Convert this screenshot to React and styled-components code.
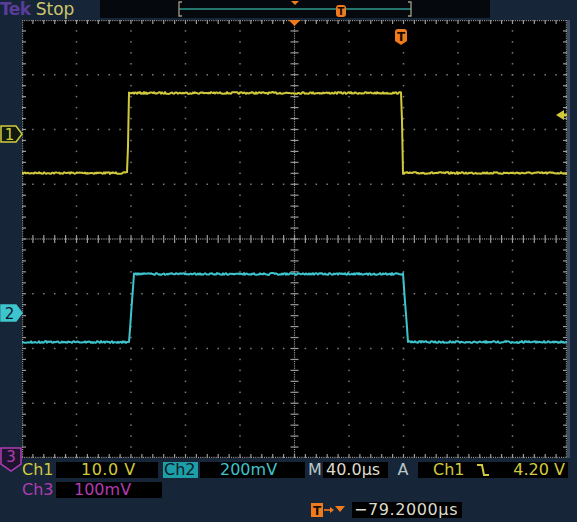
import React from "react";
import styled, { createGlobalStyle } from "styled-components";

const Global = createGlobalStyle`
  html, body { margin: 0; padding: 0; background: #172538; }
  #root { width: 577px; height: 522px; }
`;

const C = {
  bg: "#172538",
  y: "#d2ca3c",
  cy: "#3ec4cc",
  pu: "#b23cb4",
  or: "#f07a1e",
  txt: "#dcdccc",
  m: "#b9c6c6",
};

const Screen = styled.div`
  width: 577px;
  height: 522px;
  background: ${C.bg};
  overflow: hidden;
  font-family: "DejaVu Sans", Verdana, sans-serif;
  position: relative;
`;

const TopBar = styled.div`
  display: flex;
  height: 20px;
`;

const Brand = styled.div`
  width: 100px;
  display: flex;
  align-items: center;
  gap: 5px;
  font-size: 17px;
  line-height: 18px;
  height: 18px;
`;

const Tek = styled.span`
  color: #5a3c9a;
  font-weight: bold;
  letter-spacing: -0.5px;
`;

const Status = styled.span`
  color: #cdc56a;
`;

const RecordStrip = styled.div`
  width: 390px;
  height: 18px;
  background: #05080c;
`;

const Display = styled.div`
  display: flex;
  height: 438px;
`;

const Gutter = styled.div`
  width: 22px;
  position: relative;
`;

const Graticule = styled.div`
  width: 545px;
  height: 438px;
  background: #000;
`;

const RightEdge = styled.div`
  width: 3px;
  background: #3e4d66;
`;

const Marker = styled.div`
  position: absolute;
  left: 0;
  top: ${(p) => p.$top}px;
  width: 23px;
  height: ${(p) => p.$h || 18}px;
`;

const Readouts = styled.div`
  display: flex;
  flex-direction: column;
  padding-top: 4px;
  gap: 4px;
`;

const Row = styled.div`
  display: flex;
  align-items: center;
  height: 16px;
  padding-left: ${(p) => p.$pl || 22}px;
  font-size: 16px;
  line-height: 16px;
  margin-top: ${(p) => p.$mt || 0}px;
`;

const Label = styled.span`
  width: ${(p) => p.$w}px;
  margin-left: ${(p) => p.$ml || 0}px;
  color: ${(p) => p.$c};
  text-align: ${(p) => p.$align || "left"};
  white-space: nowrap;
`;

const Tag = styled.span`
  width: ${(p) => p.$w}px;
  margin-left: ${(p) => p.$ml || 0}px;
  background: #1e9ea6;
  color: #0b1b2a;
  height: 16px;
  display: flex;
  align-items: center;
  padding-left: 1px;
  box-sizing: border-box;
`;

const Box = styled.span`
  width: ${(p) => p.$w}px;
  margin-left: ${(p) => p.$ml || 0}px;
  height: 16px;
  background: #000;
  color: ${(p) => p.$c};
  padding-left: ${(p) => p.$pl || 0}px;
  box-sizing: border-box;
  display: flex;
  align-items: center;
  white-space: nowrap;
  letter-spacing: ${(p) => p.$ls || 0}px;
`;

const Spacer = styled.span`
  flex: ${(p) => (p.$grow ? 1 : "none")};
  width: ${(p) => p.$w || 0}px;
`;

const W = 545;
const H = 438;
const DX = W / 10;
const DY = H / 8;

function rng(seed) {
  let s = seed;
  return () => {
    s = (s * 16807) % 2147483647;
    return s / 2147483647;
  };
}

function wave(lo, hi, r0, r1, f0, f1, seed) {
  const r = rng(seed);
  const pts = [];
  for (let x = 0; x <= W; x += 1) {
    let y;
    if (x < r0) y = lo;
    else if (x < r1) y = lo + ((hi - lo) * (x - r0)) / (r1 - r0);
    else if (x < f0) y = hi;
    else if (x < f1) y = hi + ((lo - hi) * (x - f0)) / (f1 - f0);
    else y = lo;
    const n = (r() - 0.5) * 1.8;
    pts.push(`${x},${(y + n).toFixed(2)}`);
  }
  return pts.join(" ");
}

const yellowPts = wave(153, 73, 105.5, 107, 379.5, 381, 7);
const cyanPts = wave(322, 254, 107, 112, 381, 386, 13);

function GridDrawing() {
  const dots = [];
  const gc = "#7c7c7c";
  for (let i = 1; i < 10; i++) {
    if (i === 5) continue;
    for (let k = 1; k < 40; k++) {
      dots.push(<rect key={`v${i}-${k}`} x={i * DX - 0.75} y={(k * DY) / 5 - 0.75} width="1.5" height="1.5" fill={gc} />);
    }
  }
  for (let j = 1; j < 8; j++) {
    if (j === 4) continue;
    for (let k = 1; k < 50; k++) {
      dots.push(<rect key={`h${j}-${k}`} x={(k * DX) / 5 - 0.75} y={j * DY - 0.75} width="1.5" height="1.5" fill={gc} />);
    }
  }
  const cc = "#9a9a9a";
  const cx = 5 * DX;
  const cyy = 4 * DY;
  const center = [];
  for (let y = 0; y < H; y += 2.2) {
    center.push(<rect key={`cv${y}`} x={cx - 0.6} y={y} width="1.2" height="1.1" fill={cc} />);
  }
  for (let x = 0; x < W; x += 2.2) {
    center.push(<rect key={`ch${x}`} x={x} y={cyy - 0.6} width="1.1" height="1.2" fill={cc} />);
  }
  for (let k = 1; k < 40; k++) {
    center.push(<rect key={`tv${k}`} x={cx - 4} y={(k * DY) / 5 - 0.6} width="8" height="1.2" fill={cc} />);
  }
  for (let k = 1; k < 50; k++) {
    center.push(<rect key={`th${k}`} x={(k * DX) / 5 - 0.6} y={cyy - 4} width="1.2" height="8" fill={cc} />);
  }
  const edges = [];
  for (let x = 0; x < W; x += 2.2) {
    edges.push(<rect key={`et${x}`} x={x} y={0} width="1.1" height="1.2" fill={cc} />);
    edges.push(<rect key={`eb${x}`} x={x} y={H - 1.2} width="1.1" height="1.2" fill={cc} />);
  }
  for (let y = 0; y < H; y += 2.2) {
    edges.push(<rect key={`el${y}`} x={0} y={y} width="1.2" height="1.1" fill={cc} />);
    edges.push(<rect key={`er${y}`} x={W - 1.2} y={y} width="1.2" height="1.1" fill={cc} />);
  }
  for (let k = 1; k < 50; k++) {
    edges.push(<rect key={`tt${k}`} x={(k * DX) / 5 - 0.6} y={0} width="1.2" height="4" fill={cc} />);
    edges.push(<rect key={`tb${k}`} x={(k * DX) / 5 - 0.6} y={H - 4} width="1.2" height="4" fill={cc} />);
  }
  for (let k = 1; k < 40; k++) {
    edges.push(<rect key={`tl${k}`} x={0} y={(k * DY) / 5 - 0.6} width="4" height="1.2" fill={cc} />);
    edges.push(<rect key={`tr${k}`} x={W - 4} y={(k * DY) / 5 - 0.6} width="4" height="1.2" fill={cc} />);
  }
  return (
    <svg width={W} height={H} viewBox={`0 0 ${W} ${H}`} style={{ display: "block" }}>
      {dots}
      {center}
      {edges}
      <polyline points={cyanPts} fill="none" stroke={C.cy} strokeWidth="2" strokeLinejoin="round" />
      <polyline points={yellowPts} fill="none" stroke={C.y} strokeWidth="2" strokeLinejoin="round" />
      <polygon points={`${cx - 6},0 ${cx + 6},0 ${cx},6`} fill={C.or} />
      <g transform="translate(373,9)">
        <path d="M0,3 Q0,0 3,0 H9 Q12,0 12,3 V12 L6,16 L0,12 Z" fill={C.or} />
        <text x="6" y="12" textAnchor="middle" fontSize="12" fontWeight="bold" fontFamily="DejaVu Sans, sans-serif" fill="#1a0c00">T</text>
      </g>
      <path d="M534,95 L542,90 V93.5 H545 V96.5 H542 V100 Z" fill={C.y} />
    </svg>
  );
}

function RecordDrawing() {
  return (
    <svg width="390" height="18" viewBox="0 0 390 18" style={{ display: "block" }}>
      <rect x="79" y="8.2" width="232" height="1.6" fill="#2b8f86" />
      <path d="M82,2 H79 V16 H82" fill="none" stroke="#a39d82" strokeWidth="1.3" />
      <path d="M308,2 H311 V16 H308" fill="none" stroke="#a39d82" strokeWidth="1.3" />
      <polygon points="191,1 199,1 195,5" fill={C.or} />
      <rect x="236" y="5" width="10" height="12" rx="3" fill={C.or} />
      <text x="241" y="15" textAnchor="middle" fontSize="10" fontWeight="bold" fontFamily="DejaVu Sans, sans-serif" fill="#1a0c00">T</text>
    </svg>
  );
}

function ChannelMarker({ n, color, filled }) {
  return (
    <svg width="23" height="18" viewBox="0 0 23 18" style={{ display: "block" }}>
      <path
        d="M1,1 H16 L22,9 L16,17 H1 Z"
        fill={filled ? color : "#101a10"}
        stroke={color}
        strokeWidth="1.5"
      />
      <text
        x="9.5"
        y="14.5"
        textAnchor="middle"
        fontSize="15"
        fontFamily="DejaVu Sans, sans-serif"
        fill={filled ? "#0b1b2a" : color}
      >
        {n}
      </text>
    </svg>
  );
}

function DownMarker({ n, color }) {
  return (
    <svg width="23" height="25" viewBox="0 0 23 25" style={{ display: "block" }}>
      <path d="M1,1 H21 V17 L11,24 L1,17 Z" fill="#1e1430" stroke={color} strokeWidth="1.5" />
      <text x="11" y="15" textAnchor="middle" fontSize="15" fontFamily="DejaVu Sans, sans-serif" fill={color}>
        {n}
      </text>
    </svg>
  );
}

function FallEdge() {
  return (
    <svg width="12" height="14" viewBox="0 0 12 14" style={{ display: "block" }}>
      <path d="M0,2 H5 L7,12 H12" fill="none" stroke={C.y} strokeWidth="2" />
    </svg>
  );
}

function TriggerPos() {
  return (
    <svg width="36" height="16" viewBox="0 0 36 16" style={{ display: "block" }}>
      <rect x="0" y="1" width="12" height="14" fill={C.or} />
      <text x="6" y="13" textAnchor="middle" fontSize="12" fontWeight="bold" fontFamily="DejaVu Sans, sans-serif" fill="#1a0c00">T</text>
      <path d="M13,8 H20" stroke={C.or} strokeWidth="1.6" />
      <polygon points="19,5 23,8 19,11" fill={C.or} />
      <polygon points="24,4 34,4 29,10" fill={C.or} />
    </svg>
  );
}

export default function App() {
  return (
    <Screen>
      <Global />
      <TopBar>
        <Brand>
          <Tek>Tek</Tek>
          <Status>Stop</Status>
        </Brand>
        <RecordStrip>
          <RecordDrawing />
        </RecordStrip>
      </TopBar>
      <Display>
        <Gutter>
          <Marker $top={105}>
            <ChannelMarker n="1" color={C.y} />
          </Marker>
          <Marker $top={284}>
            <ChannelMarker n="2" color={C.cy} filled />
          </Marker>
          <Marker $top={427} $h={25}>
            <DownMarker n="3" color={C.pu} />
          </Marker>
        </Gutter>
        <Graticule>
          <GridDrawing />
        </Graticule>
        <RightEdge />
      </Display>
      <Readouts>
        <Row>
          <Label $w={34} $c={C.y}>Ch1</Label>
          <Box $w={102} $c={C.y} $pl={25} $ls={0.5}>10.0 V</Box>
          <Tag $w={35} $ml={5}>Ch2</Tag>
          <Box $w={105} $ml={2} $c={C.cy} $pl={20}>200mV</Box>
          <Label $w={15} $ml={3} $c={C.m}>M</Label>
          <Box $w={65} $c={C.txt} $pl={3}>40.0µs</Box>
          <Label $w={30} $c={C.m} $align="center">A</Label>
          <Box $w={150} $c={C.y} $pl={15}>
            Ch1
            <Spacer $w={12} />
            <FallEdge />
            <Spacer $grow />
            <span style={{ paddingRight: 3 }}>4.20 V</span>
          </Box>
        </Row>
        <Row>
          <Label $w={34} $c={C.pu}>Ch3</Label>
          <Box $w={106} $c={C.pu} $pl={18}>100mV</Box>
        </Row>
        <Row $pl={311}>
          <TriggerPos />
          <Box $w={110} $ml={5} $c={C.txt} $pl={2} $ls={0.6}>−79.2000µs</Box>
        </Row>
      </Readouts>
    </Screen>
  );
}
